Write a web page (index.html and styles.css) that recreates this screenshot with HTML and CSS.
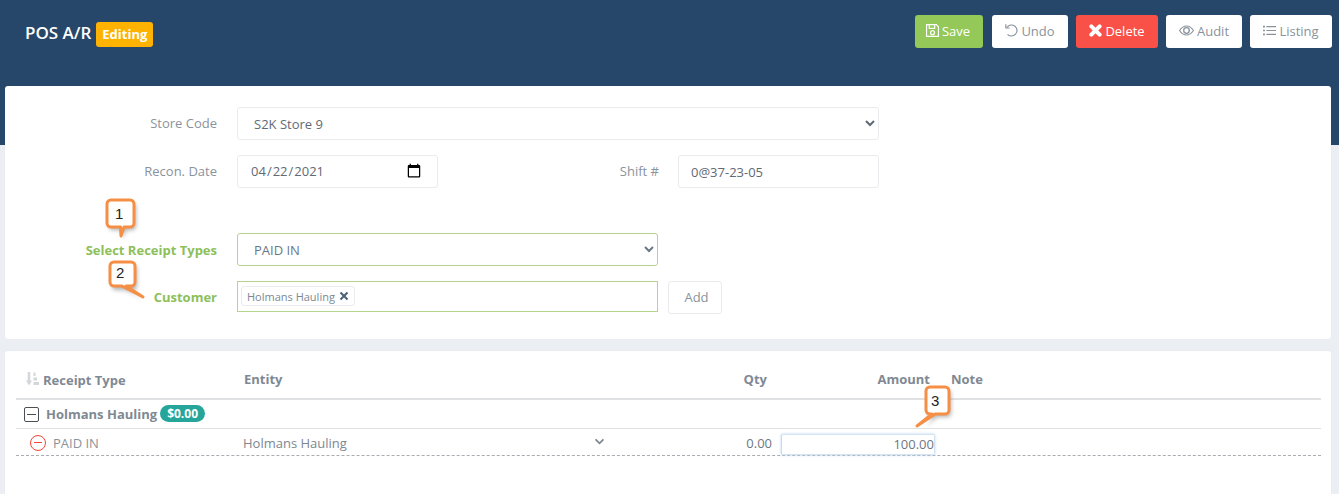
FILE: index.html
```html
<!DOCTYPE html>
<html lang="en">
<head>
<meta charset="utf-8">
<title>POS A/R</title>
<link rel="stylesheet" href="styles.css">
</head>
<body>
<header class="topbar">
  <div class="title-wrap">
    <span class="title">POS A/R</span>
    <span class="badge-editing">Editing</span>
  </div>
  <div class="actions">
    <button class="btn btn-save"><svg class="ico" viewBox="1 1 12 12"><path d="M1.500 1.500h9l2 2v9h-11z M4 1.500v3.500h5V1.500" fill="none" stroke="currentColor" stroke-width="1.100"/><circle cx="7" cy="9" r="1.800" fill="none" stroke="currentColor" stroke-width="1.100"/></svg><span>Save</span></button>
    <button class="btn btn-undo"><svg class="ico" viewBox="1 1 12.500 12.500"><path d="M2.900 4.200A5.300 5.300 0 1 1 3.400 10.900" fill="none" stroke="currentColor" stroke-width="1.100"/><path d="M1.800 1.200v3.600h3.600" fill="none" stroke="currentColor" stroke-width="1.100"/></svg><span>Undo</span></button>
    <button class="btn btn-delete"><svg class="ico" viewBox="1.500 1.500 11 11"><path d="M3.500 3.500l7 7M10.500 3.500l-7 7" stroke="currentColor" stroke-width="3.400" stroke-linecap="round"/></svg><span>Delete</span></button>
    <button class="btn btn-audit"><svg class="ico ico-wide" viewBox="0.500 1 15 12"><path d="M1 7c2-3 4.300-4.500 7-4.500S13 4 15 7c-2 3-4.300 4.500-7 4.500S3 10 1 7z" fill="none" stroke="currentColor" stroke-width="1.100"/><circle cx="8" cy="7" r="2.800" fill="none" stroke="currentColor" stroke-width="1.300"/></svg><span>Audit</span></button>
    <button class="btn btn-listing"><svg class="ico" viewBox="0.500 1 13.500 12"><path d="M4 3h10M4 7h10M4 11h10" stroke="currentColor" stroke-width="1.100"/><path d="M0.500 3h2M0.500 7h2M0.500 11h2" stroke="currentColor" stroke-width="1.800"/></svg><span>Listing</span></button>
  </div>
</header>

<main class="content">
  <section class="card form-card">
    <div class="row row-store">
      <label class="lbl">Store Code</label>
      <select class="ctl ctl-store"><option>S2K Store 9</option></select>
    </div>
    <div class="row row-date">
      <label class="lbl">Recon. Date</label>
      <input class="ctl ctl-date" type="date" value="2021-04-22">
      <label class="lbl lbl-shift">Shift #</label>
      <input class="ctl ctl-shift" type="text" value="0@37-23-05">
    </div>
    <div class="row row-receipt">
      <label class="lbl lbl-green">Select Receipt Types</label>
      <select class="ctl ctl-receipt"><option>PAID IN</option></select>
    </div>
    <div class="row row-customer">
      <label class="lbl lbl-green">Customer</label>
      <div class="ctl-tags">
        <span class="tag">Holmans Hauling<svg class="tag-x" viewBox="0 0 10 10"><path d="M1.500 1.500l7 7M8.500 1.500l-7 7" stroke="currentColor" stroke-width="2"/></svg></span>
      </div>
      <button class="btn-add">Add</button>
    </div>
  </section>

  <section class="card table-card">
    <div class="grid-row head-row">
      <div class="c-type"><svg class="sort" viewBox="0 0 13 14"><path d="M3 0v10" fill="none" stroke="currentColor" stroke-width="2.600"/><path d="M0 8.500h6L3 13.500z" fill="currentColor"/><path d="M7.500 0.500h2v3.500h-2zM7.500 5.500h3.500v3h-3.500zM7.500 10h5.500v3h-5.500z" fill="currentColor"/></svg>Receipt Type</div>
      <div class="c-entity">Entity</div>
      <div class="c-qty">Qty</div>
      <div class="c-amount">Amount</div>
      <div class="c-note">Note</div>
    </div>
    <div class="group-row">
      <span class="collapse"></span>
      <span class="group-name">Holmans Hauling</span>
      <span class="pill">$0.00</span>
    </div>
    <div class="grid-row data-row">
      <div class="c-type c-type-data"><span class="remove"></span>PAID IN</div>
      <div class="c-entity c-entity-data">Holmans Hauling<svg class="chev" viewBox="0 0 12 8"><path d="M1.500 1.500L6 6l4.500-4.500" fill="none" stroke="currentColor" stroke-width="2"/></svg></div>
      <div class="c-qty c-qty-data">0.00</div>
      <div class="c-amount-data"><input class="amount-input" type="text" value="100.00"></div>
    </div>
  </section>
</main>

<div class="callout callout-1">
  <svg viewBox="0 0 50 50"><path class="co-shadow" d="M8 5h19a4 4 0 0 1 4 4v19a4 4 0 0 1-4 4h-6l-3 9-1-9H8a4 4 0 0 1-4-4V9a4 4 0 0 1 4-4z"/><path class="co-shape" d="M6 2h19a4 4 0 0 1 4 4v19a4 4 0 0 1-4 4h-6l-3 9-0.500-9H6a4 4 0 0 1-4-4V6a4 4 0 0 1 4-4z"/></svg>
  <span class="co-num">1</span>
</div>
<div class="callout callout-2">
  <svg viewBox="0 0 50 50"><path class="co-shadow" d="M7 5h17a4 4 0 0 1 4 4v17a4 4 0 0 1-4 4h-4l17 10-21-10H7a4 4 0 0 1-4-4V9a4 4 0 0 1 4-4z"/><path class="co-shape" d="M5 2h17a4 4 0 0 1 4 4v16a4 4 0 0 1-4 4h-5l17 11-21-11H5a4 4 0 0 1-4-4V6a4 4 0 0 1 4-4z"/></svg>
  <span class="co-num">2</span>
</div>
<div class="callout callout-3">
  <svg viewBox="0 0 50 50"><path class="co-shadow" d="M16 5h15a4 4 0 0 1 4 4v19a4 4 0 0 1-4 4H21l-10 9 6-9a4 4 0 0 1-5-4V9a4 4 0 0 1 4-4z"/><path class="co-shape" d="M14 2h15a4 4 0 0 1 4 4v19a4 4 0 0 1-4 4H19L1 41l15-12h-2a4 4 0 0 1-4-4V6a4 4 0 0 1 4-4z"/></svg>
  <span class="co-num">3</span>
</div>
</body>
</html>
```

FILE: styles.css
```css
* { box-sizing: border-box; }
html, body { margin: 0; padding: 0; }
body {
  width: 1339px;
  height: 494px;
  overflow: hidden;
  position: relative;
  background: #ebeef3;
  font-family: "Open Sans", "Liberation Sans", sans-serif;
  font-size: 13px;
  color: #8a939c;
}
.topbar {
  height: 145px;
  background: #26476a;
  display: flex;
  justify-content: space-between;
  align-items: flex-start;
  padding: 15px 7px 0 25px;
}
.title-wrap { display: flex; align-items: center; padding-top: 7px; }
.title { color: #fff; font-size: 17px; font-weight: 600; line-height: 25px; margin-top: -4px; }
.badge-editing {
  margin-left: 5px;
  background: #ffb300;
  color: #fff;
  font-size: 13px;
  font-weight: 700;
  height: 25px;
  line-height: 25px;
  width: 57px;
  text-align: center;
  border-radius: 3px;
}
.actions { display: flex; gap: 8px; }
.btn {
  height: 33px;
  border: 0;
  border-radius: 3px;
  font-family: inherit;
  font-size: 13px;
  padding: 0 0 2px;
  display: flex;
  align-items: center;
  justify-content: center;
  background: #fff;
  color: #8a939c;
}
.ico { width: 13px; height: 13px; margin-right: 3px; flex: none; }
.ico-wide { width: 15px; }
.btn-save { width: 68px; margin-right: 1px; padding-right: 2px; background: #94c858; color: #fff; }
.btn-undo { width: 76px; }
.btn-delete { width: 82px; background: #f95147; color: #fff; }
.btn-audit { width: 76px; }
.btn-listing { width: 82px; }

.content { padding: 0 8px 0 5px; margin-top: -59px; }
.card { background: #fff; border-radius: 3px; position: relative; }
.form-card { height: 253px; padding-top: 21px; box-shadow: 0 0 1px rgba(0,0,0,.08); }
.row { display: flex; align-items: center; }
.lbl { width: 212px; text-align: right; flex: none; margin-right: 20px; color: #8a939c; padding-bottom: 2px; }
.lbl-green { color: #8dc05a; font-weight: 700; padding-bottom: 0; }
.ctl {
  height: 33px;
  border: 1px solid #e9ebee;
  border-radius: 3px;
  background: #fff;
  font-family: inherit;
  font-size: 13px;
  color: #5f6a75;
  outline: 0;
}
select.ctl { padding: 0 8px 0 12px; }
.row-date { margin-top: 15px; }
.row-receipt { margin-top: 45px; }
.row-customer { margin-top: 15px; align-items: flex-start; }
.row-customer .lbl { line-height: 33px; }
.ctl-store { width: 642px; }
.ctl-date { width: 201px; padding: 0 12px 1px; }
.ctl-date::-webkit-calendar-picker-indicator { width: 16px; height: 16px; margin: 0 3px 0 0; padding: 0; }
.lbl-shift { width: 221px; margin-right: 19px; }
.ctl-shift { width: 201px; padding: 0 12px; }
.ctl-receipt { width: 421px; border-color: #b5d48d; color: #6b7884; }
.ctl-tags {
  width: 421px;
  height: 31px;
  border: 1px solid #b5d48d;
  display: flex;
  align-items: flex-start;
  padding: 4px 0 0 3px;
}
.tag {
  display: flex;
  align-items: center;
  height: 20px;
  padding: 0 5px;
  border: 1px solid #e9ebee;
  border-radius: 3px;
  font-size: 11px;
  color: #7c8894;
}
.tag-x { width: 10px; height: 10px; margin-left: 4px; color: #4a6178; }
.btn-add {
  width: 54px;
  height: 33px;
  margin-left: 10px;
  padding: 0 0 2px 3px;
  border: 1px solid #e9ebee;
  border-radius: 3px;
  background: #fff;
  font-family: inherit;
  font-size: 13px;
  color: #8a939c;
}

.table-card { margin-top: 12px; height: 150px; padding: 0 10px 0 11px; box-shadow: 0 0 1px rgba(0,0,0,.08); }
.grid-row {
  display: grid;
  grid-template-columns: 228px 367px 156px 163px 1fr;
  align-items: center;
}
.head-row {
  height: 49px;
  padding-top: 9px;
  border-bottom: 2px solid #dfe1e3;
  font-weight: 700;
  color: #7f8994;
}
.c-type { display: flex; align-items: center; padding-left: 10px; }
.head-row .c-type { padding-top: 2px; }
.sort { width: 13px; height: 14px; margin-right: 4px; margin-top: -3px; color: #d3d6da; }
.c-qty { text-align: right; }
.c-amount { text-align: right; }
.c-note { padding-left: 21px; }
.group-row {
  height: 29px;
  border-bottom: 1px solid #dfe1e3;
  display: flex;
  align-items: center;
  padding: 0 0 1px 8px;
}
.collapse { width: 15px; height: 15px; margin-top: 1px; border: 1px solid #4a4f55; border-radius: 2px; position: relative; flex: none; }
.collapse::after { content: ""; position: absolute; left: 2px; right: 2px; top: 6px; height: 1px; background: #4a4f55; }
.group-name { margin-left: 7px; font-weight: 700; color: #7f8994; }
.pill {
  margin-left: 3px;
  background: #26a69a;
  color: #fff;
  font-size: 12px;
  font-weight: 700;
  height: 17px;
  line-height: 17px;
  padding: 0 7px;
  border-radius: 9px;
}
.data-row { height: 27px; border-bottom: 1px dashed #a9adb1; padding-top: 1px; }
.c-type-data { padding-left: 14px; color: #8a939c; }
.remove { width: 16px; height: 16px; border: 1px solid #f44336; border-radius: 50%; position: relative; margin: 1px 7px 0 0; flex: none; }
.remove::after { content: ""; position: absolute; left: 3px; right: 3px; top: 6px; height: 1px; background: #f44336; }
.c-entity-data { display: flex; align-items: center; justify-content: space-between; color: #7c8791; width: 362px; margin-left: -1px; }
.chev { width: 11px; height: 7px; margin-top: -2px; color: #7c8791; flex: none; }
.c-qty-data { color: #6f7780; text-align: right; margin: 1px -5px 0 0; }
.c-amount-data { padding-left: 14px; margin-right: -5px; align-self: end; }
.amount-input {
  display: block;
  width: 154px;
  height: 21px;
  border: 1px solid #d4e4f3;
  border-left-color: #c4dcf2;
  border-radius: 2px;
  box-shadow: 0 0 3px #b9d6ee;
  text-align: right;
  padding: 0 0 1px;
  font-family: inherit;
  font-size: 13px;
  color: #6f7780;
  outline: 0;
  background: #fff;
}

.callout { position: absolute; width: 50px; height: 50px; }
.callout svg { width: 50px; height: 50px; display: block; overflow: visible; }
.co-shape { fill: #fff; stroke: #f58f45; stroke-width: 3; stroke-linejoin: round; }
.co-shadow { fill: #7d7d7d; opacity: .6; filter: blur(2px); }
.co-num { position: absolute; font-family: "Liberation Sans", Arial, sans-serif; font-size: 15px; color: #222; line-height: 16px; }
.callout-1 { left: 105px; top: 198px; }
.callout-1 .co-num { left: 10px; top: 8px; }
.callout-2 { left: 109px; top: 260px; }
.callout-2 .co-num { left: 7px; top: 5px; }
.callout-3 { left: 916px; top: 385px; }
.callout-3 .co-num { left: 15px; top: 8px; }
```
